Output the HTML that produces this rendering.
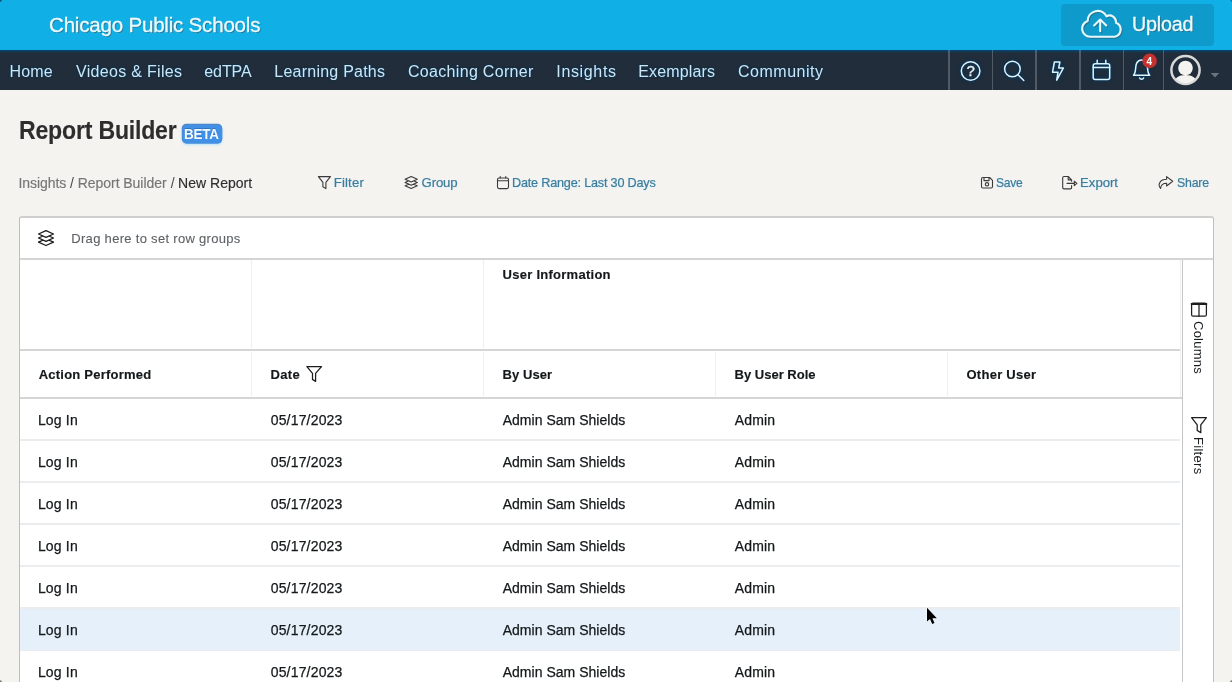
<!DOCTYPE html>
<html lang="en">
<head>
<meta charset="utf-8">
<title>Report Builder - Chicago Public Schools</title>
<style>
*{box-sizing:border-box;margin:0;padding:0}
html,body{width:1232px;height:682px;overflow:hidden;background:#f4f3f0;font-family:"Liberation Sans",sans-serif}
body{position:relative;will-change:transform}
.t{position:absolute;white-space:nowrap;line-height:1;font-weight:normal;transform-origin:0 50%}
header,nav,main,section,.toolbar,.row,.headers{display:block;position:static}
a{text-decoration:none}
.b{position:absolute}
svg{position:absolute;overflow:visible}
#top{left:0;top:0;width:1232px;height:50px;background:#10b0e6}
#upload{left:1061px;top:4px;width:153px;height:42px;border-radius:4px;background:#0e9bcb}
.brand,.upl{color:#ecfbff;text-shadow:1px 1px 0 rgba(60,80,95,.6);-webkit-text-stroke:.3px #ecfbff}
#nav{left:0;top:50px;width:1232px;height:40px;background:linear-gradient(#06446f 0,#0b3f63 1px,#1a3447 2.2px,#212d3a 3.5px,#212d3a 100%)}
.sep{position:absolute;top:50px;width:1.4px;height:40px;background:rgba(255,255,255,.22)}
.nv{color:#cfe6f1;text-shadow:0 0 2px rgba(0,55,95,1),0 0 2px rgba(0,55,95,.8)}
.h1{color:#2d2d2d;font-weight:bold;-webkit-text-stroke:.12px #2d2d2d}
.beta{color:#f2fbff;font-weight:bold;text-shadow:0 -1px 0 rgba(30,60,110,.35)}
.bc.g{color:#767676;-webkit-text-stroke:.15px #767676}
.bc.s{color:#4a4a4a}
.bc.d{color:#2e2e2e;-webkit-text-stroke:.15px #2e2e2e}
.tl{color:#3d7b9a;text-shadow:0 1px 1px #d4f1fd;-webkit-text-stroke:.2px #3d7b9a}
#grid{left:19px;top:216px;width:1195px;height:480px;background:#fff;border:1px solid #bebebe;border-top:2px solid #d0cfce;border-radius:3px}
.hl{position:absolute;height:2px;background:#ebecee}
.hl2{position:absolute;height:2px;background:#d5d5d5}
.vl{position:absolute;width:1px;background:#efefef}
.drag{color:#5e6265;-webkit-text-stroke:.1px #5e6265}
.hd{color:#14181a;font-weight:bold;-webkit-text-stroke:.15px #14181a}
.cl{color:#14181a;-webkit-text-stroke:.25px #14181a}
.side{position:absolute;font-size:13px;line-height:1;color:#181d1f;white-space:nowrap;transform-origin:0 0;transform:rotate(90deg)}
.cn{position:absolute;width:4px;height:4px}
</style>
</head>
<body>
<header>
<div id="top" class="b"></div>
<div class="t brand" style="left:48.91px;top:15px;font-size:20.8px;letter-spacing:-0.220px;transform:scaleX(0.9888);">Chicago Public Schools</div>
<div id="upload" class="b"></div>
<svg style="left:1081px;top:9px;filter:drop-shadow(1px 1px 0 rgba(60,80,95,.55))" width="42" height="30" viewBox="0 0 42 30">
  <path transform="matrix(1.052 0 0 1.0676 -0.96 -1.94)" d="M9.5,27.8 A7.6,7.6 0 0 1 7.2,13 A9.6,9.6 0 0 1 25.2,8.6 A6.2,6.2 0 0 1 34.2,14.6 A6.9,6.9 0 0 1 33,27.8 Z" fill="none" stroke="#e6f9ff" stroke-width="2.05" stroke-linejoin="round"/>
  <path d="M19.2,22.2 V11.2 M13.1,16.5 L19.2,10.5 L25.3,16.5" fill="none" stroke="#e6f9ff" stroke-width="2.05" stroke-linecap="round" stroke-linejoin="round"/>
</svg>
<span class="t upl" style="left:1131.54px;top:14px;font-size:20.5px;letter-spacing:-0.220px;transform:scaleX(0.9622);">Upload</span>
</header>
<nav>
<div id="nav" class="b"></div>
<div class="sep" style="left:948.3px"></div>
<div class="sep" style="left:991.8px"></div>
<div class="sep" style="left:1035.3px"></div>
<div class="sep" style="left:1079.3px"></div>
<div class="sep" style="left:1122.8px"></div>
<div class="sep" style="left:1162.9px"></div>
<a class="t nv" style="left:9.60px;top:64px;font-size:16px;letter-spacing:0.140px;">Home</a>
<a class="t nv" style="left:76.00px;top:64px;font-size:16px;letter-spacing:0.309px;">Videos &amp; Files</a>
<a class="t nv" style="left:204.30px;top:64px;font-size:16px;letter-spacing:-0.089px;">edTPA</a>
<a class="t nv" style="left:274.30px;top:64px;font-size:16px;letter-spacing:0.236px;">Learning Paths</a>
<a class="t nv" style="left:408.00px;top:64px;font-size:16px;letter-spacing:0.312px;">Coaching Corner</a>
<a class="t nv" style="left:556.30px;top:64px;font-size:16px;letter-spacing:0.651px;">Insights</a>
<a class="t nv" style="left:638.30px;top:64px;font-size:16px;letter-spacing:0.140px;">Exemplars</a>
<a class="t nv" style="left:738.00px;top:64px;font-size:16px;letter-spacing:0.512px;">Community</a>
<svg class="ni" style="left:949px;top:52px" width="283" height="38" viewBox="949 52 283 38">
  <g fill="none" stroke="#dff3fb" stroke-width="1.5" stroke-linecap="round" stroke-linejoin="round" style="filter:drop-shadow(0 0 1.5px rgba(0,55,95,1)) drop-shadow(0 0 1.5px rgba(0,55,95,.8))">
    <circle cx="970.6" cy="71" r="9.3"/>
    <circle cx="1012.4" cy="69" r="7.8"/>
    <path d="M1018,74.7 L1023.8,80.5"/>
    <path d="M1054.4,62 H1059.9 L1058.7,67.9 H1063.4 L1056.7,80.2 L1058,72.3 H1052.5 Z"/>
    <rect x="1093.2" y="63.8" width="16.500" height="15.700" rx="2"/>
    <path d="M1093.2,67.6 H1109.7 M1097.2,60.2 V63 M1105.8,60.2 V63"/>
    <path d="M1133.5,75.2 C1136.4,72.6 1135,66.5 1136.6,63.4 C1137.8,61 1139.8,60.1 1141.6,60.1 C1143.4,60.1 1145.4,61 1146.6,63.4 C1148.2,66.5 1146.8,72.6 1149.7,75.2 Z"/>
    <path d="M1139.6,78 C1140.3,79.6 1142.9,79.6 1143.6,78"/>
  </g>
  <text x="970.6" y="76.1" text-anchor="middle" font-family="Liberation Sans, sans-serif" font-size="15" fill="#dff3fb" stroke="#dff3fb" stroke-width=".35">?</text>
  <circle cx="1149.6" cy="60.9" r="7.3" fill="#c5312f"/>
  <text x="1149.4" y="64.5" text-anchor="middle" font-family="Liberation Sans, sans-serif" font-size="10" font-weight="bold" fill="#fff">4</text>
  <clipPath id="av"><circle cx="1185.5" cy="70" r="13.2"/></clipPath>
  <circle cx="1185.5" cy="70" r="14.1" fill="#212d3a" stroke="#d9d9d9" stroke-width="2.500"/>
  <g clip-path="url(#av)" fill="#f4f3f0">
    <circle cx="1185.5" cy="68" r="7.3"/>
    <path d="M1173.5,86 C1173.5,78.300 1178,75 1185.5,75 C1193,75 1197.5,78.300 1197.5,86 Z"/>
  </g>
  <path d="M1210.7,73 H1219.3 L1215,77.4 Z" fill="#6b747d"/>
</svg>
</nav>
<main>
<svg style="left:176px;top:118px;filter:drop-shadow(0 1px 1px rgba(170,225,255,.95))" width="52" height="32" viewBox="176 118 52 32"><rect x="181.800" y="123.700" width="40.400" height="19.700" rx="4.600" fill="#5783b8"/><rect x="182.300" y="124.500" width="39.900" height="18.900" rx="4.300" fill="#428fe6"/></svg>
<h1 class="t h1" style="left:18.89px;top:118px;font-size:25.5px;letter-spacing:-0.220px;transform:scaleX(0.9053);">Report Builder</h1>
<span class="t beta" style="left:184.41px;top:126px;font-size:15.2px;letter-spacing:-0.220px;transform:scaleX(0.8863);">BETA</span>
<nav class="crumbs">
<a class="t bc g" style="left:18.50px;top:176px;font-size:14px;letter-spacing:-0.064px;">Insights</a>
<span class="t bc s" style="left:69.90px;top:176px;font-size:14px;">/</span>
<a class="t bc g" style="left:77.80px;top:176px;font-size:14px;letter-spacing:-0.056px;">Report Builder</a>
<span class="t bc s" style="left:170.70px;top:176px;font-size:14px;">/</span>
<span class="t bc d" style="left:178.10px;top:176px;font-size:14px;letter-spacing:0.008px;">New Report</span>
</nav>
<div class="toolbar">
<svg style="left:310px;top:170px" width="910" height="26" viewBox="310 170 910 26">
  <g fill="none" stroke="#3a3a3a" stroke-width="1.1" stroke-linejoin="round" stroke-linecap="round">
    <path d="M318.4,176.6 H330.4 L325.9,182.4 V188.6 L322.9,186.8 V182.4 Z"/>
    <path d="M411.20,176.50 L417.30,179.20 L411.20,181.91 L405.10,179.20 Z M408.82,180.85 L405.10,182.50 L411.20,185.20 L417.30,182.50 L413.58,180.85 M408.82,184.15 L405.10,185.80 L411.20,188.50 L417.30,185.80 L413.58,184.15"/>
    <rect x="497.5" y="178" width="11" height="10.6" rx="1.6"/>
    <path d="M497.5,180.8 H508.500 M500.2,176.500 V178 M505.8,176.500 V178"/>
    <path d="M982.9,177.500 H989.6 L992.500,180.4 V186.6 Q992.500,188 991.1,188 H982.9 Q981.500,188 981.500,186.6 V178.900 Q981.500,177.500 982.9,177.500 Z M984,177.500 V180.6 H989 V177.500"/>
    <circle cx="987" cy="184.300" r="1.7"/>
    <path d="M1071.6,185.500 V187.600 Q1071.600,188.900 1070.300,188.900 H1064 Q1062.700,188.900 1062.700,187.600 V177.800 Q1062.700,176.500 1064,176.500 H1068.200 L1071.600,179.900 V181.300 M1068.200,176.500 V179.900 H1071.600 M1067,183.400 H1074.300 M1074.300,181.200 L1076.900,183.400 L1074.300,185.600 Z"/>
    <path d="M1166.6,176.600 L1172.700,181.300 L1166.600,186 V183.300 C1162.600,183.300 1160.900,184.900 1160.600,188.400 C1157.200,184.400 1160.200,179.300 1166.600,179.300 Z"/>
  </g>
</svg>
<a class="t tl" style="left:333.80px;top:176px;font-size:13.2px;letter-spacing:0.137px;">Filter</a>
<a class="t tl" style="left:421.50px;top:176px;font-size:13.2px;letter-spacing:-0.129px;">Group</a>
<a class="t tl" style="left:511.84px;top:176px;font-size:13.2px;letter-spacing:-0.220px;transform:scaleX(0.9609);">Date Range: Last 30 Days</a>
<a class="t tl" style="left:995.60px;top:176px;font-size:13.2px;letter-spacing:-0.220px;transform:scaleX(0.9118);">Save</a>
<a class="t tl" style="left:1080.10px;top:176px;font-size:13.2px;letter-spacing:-0.050px;">Export</a>
<a class="t tl" style="left:1176.80px;top:176px;font-size:13.2px;letter-spacing:-0.220px;transform:scaleX(0.9360);">Share</a>
</div>
<section class="gridwrap" role="grid">
<div id="grid" class="b"></div>
<div class="vl" style="left:251px;top:260px;height:88px"></div>
<div class="vl" style="left:483px;top:260px;height:88px"></div>
<div class="vl" style="left:251px;top:352px;height:44px"></div>
<div class="vl" style="left:483px;top:352px;height:44px"></div>
<div class="vl" style="left:715px;top:352px;height:44px"></div>
<div class="vl" style="left:947px;top:352px;height:44px"></div>
<div class="vl" style="left:1180px;top:260px;height:137px"></div>
<div class="vl" style="left:1182px;top:260px;height:440px;background:#c3c6c9"></div>
<div class="hl2" style="left:20px;top:258px;width:1193px"></div>
<div class="hl2" style="left:20px;top:349px;width:1160px"></div>
<div class="hl2" style="left:20px;top:397px;width:1162px"></div>
<div class="hl" style="left:20px;top:439px;width:1160px"></div>
<div class="hl" style="left:20px;top:481px;width:1160px"></div>
<div class="hl" style="left:20px;top:523px;width:1160px"></div>
<div class="hl" style="left:20px;top:565px;width:1160px"></div>
<div class="hl" style="left:20px;top:607px;width:1160px"></div>
<div class="hl" style="left:20px;top:649px;width:1160px"></div>
<div class="b" style="left:20px;top:608.6px;width:1160px;height:41.4px;background:#e5f0fa"></div>
<div class="t drag" style="left:71.30px;top:232px;font-size:13px;letter-spacing:0.302px;">Drag here to set row groups</div>
<div class="headers" role="row">
<div class="t hd" style="left:502.60px;top:268px;font-size:13px;letter-spacing:0.262px;">User Information</div>
<div class="t hd" style="left:38.70px;top:368px;font-size:13px;letter-spacing:0.231px;">Action Performed</div>
<div class="t hd" style="left:270.60px;top:368px;font-size:13px;letter-spacing:0.318px;">Date</div>
<div class="t hd" style="left:502.60px;top:368px;font-size:13px;letter-spacing:0.054px;">By User</div>
<div class="t hd" style="left:734.60px;top:368px;font-size:13px;">By User Role</div>
<div class="t hd" style="left:966.50px;top:368px;font-size:13px;letter-spacing:0.263px;">Other User</div>
</div>
<div class="row" role="row">
<div class="t cl" style="left:37.90px;top:413px;font-size:14px;letter-spacing:0.172px;">Log In</div>
<div class="t cl" style="left:270.70px;top:413px;font-size:14px;letter-spacing:0.180px;">05/17/2023</div>
<div class="t cl" style="left:502.70px;top:413px;font-size:14px;letter-spacing:0.021px;">Admin Sam Shields</div>
<div class="t cl" style="left:734.70px;top:413px;font-size:14px;letter-spacing:0.176px;">Admin</div>
</div>
<div class="row" role="row">
<div class="t cl" style="left:37.90px;top:455px;font-size:14px;letter-spacing:0.172px;">Log In</div>
<div class="t cl" style="left:270.70px;top:455px;font-size:14px;letter-spacing:0.180px;">05/17/2023</div>
<div class="t cl" style="left:502.70px;top:455px;font-size:14px;letter-spacing:0.021px;">Admin Sam Shields</div>
<div class="t cl" style="left:734.70px;top:455px;font-size:14px;letter-spacing:0.176px;">Admin</div>
</div>
<div class="row" role="row">
<div class="t cl" style="left:37.90px;top:497px;font-size:14px;letter-spacing:0.172px;">Log In</div>
<div class="t cl" style="left:270.70px;top:497px;font-size:14px;letter-spacing:0.180px;">05/17/2023</div>
<div class="t cl" style="left:502.70px;top:497px;font-size:14px;letter-spacing:0.021px;">Admin Sam Shields</div>
<div class="t cl" style="left:734.70px;top:497px;font-size:14px;letter-spacing:0.176px;">Admin</div>
</div>
<div class="row" role="row">
<div class="t cl" style="left:37.90px;top:539px;font-size:14px;letter-spacing:0.172px;">Log In</div>
<div class="t cl" style="left:270.70px;top:539px;font-size:14px;letter-spacing:0.180px;">05/17/2023</div>
<div class="t cl" style="left:502.70px;top:539px;font-size:14px;letter-spacing:0.021px;">Admin Sam Shields</div>
<div class="t cl" style="left:734.70px;top:539px;font-size:14px;letter-spacing:0.176px;">Admin</div>
</div>
<div class="row" role="row">
<div class="t cl" style="left:37.90px;top:581px;font-size:14px;letter-spacing:0.172px;">Log In</div>
<div class="t cl" style="left:270.70px;top:581px;font-size:14px;letter-spacing:0.180px;">05/17/2023</div>
<div class="t cl" style="left:502.70px;top:581px;font-size:14px;letter-spacing:0.021px;">Admin Sam Shields</div>
<div class="t cl" style="left:734.70px;top:581px;font-size:14px;letter-spacing:0.176px;">Admin</div>
</div>
<div class="row" role="row">
<div class="t cl" style="left:37.90px;top:623px;font-size:14px;letter-spacing:0.172px;">Log In</div>
<div class="t cl" style="left:270.70px;top:623px;font-size:14px;letter-spacing:0.180px;">05/17/2023</div>
<div class="t cl" style="left:502.70px;top:623px;font-size:14px;letter-spacing:0.021px;">Admin Sam Shields</div>
<div class="t cl" style="left:734.70px;top:623px;font-size:14px;letter-spacing:0.176px;">Admin</div>
</div>
<div class="row" role="row">
<div class="t cl" style="left:37.90px;top:665px;font-size:14px;letter-spacing:0.172px;">Log In</div>
<div class="t cl" style="left:270.70px;top:665px;font-size:14px;letter-spacing:0.180px;">05/17/2023</div>
<div class="t cl" style="left:502.70px;top:665px;font-size:14px;letter-spacing:0.021px;">Admin Sam Shields</div>
<div class="t cl" style="left:734.70px;top:665px;font-size:14px;letter-spacing:0.176px;">Admin</div>
</div>
<div class="side" style="left:1205.4px;top:321.4px;letter-spacing:.25px">Columns</div>
<div class="side" style="left:1205.4px;top:437px;letter-spacing:.3px">Filters</div>
<svg style="left:30px;top:225px" width="1190" height="220" viewBox="30 225 1190 220">
  <g fill="none" stroke="#1d1d1d" stroke-width="1.25" stroke-linejoin="round" stroke-linecap="round">
    <path d="M46.00,230.60 L53.50,233.96 L46.00,237.31 L38.50,233.96 Z M43.08,236.00 L38.50,238.05 L46.00,241.41 L53.50,238.05 L48.92,236.00 M43.08,240.10 L38.50,242.14 L46.00,245.50 L53.50,242.14 L48.92,240.10"/>
    <path d="M306.900,366.600 H321.500 L315.600,373.300 V381.400 L312.500,379.400 V373.300 Z"/>
    <rect x="1191.600" y="303.100" width="14.800" height="13.100" rx="1.500"/>
    <path d="M1191.600,304 H1206.400" stroke-width="2"/><path d="M1199,305 V316.200"/>
    <path d="M1191.600,417.700 H1206.400 L1200.800,424.900 V432.700 L1197.200,430.400 V424.900 Z"/>
  </g>
</svg>
</section>
</main>
<svg style="left:925px;top:606px" width="16" height="22" viewBox="0 0 16 22">
  <path d="M2,1.800 V15.600 L5,13 L7.200,17.900 L9.500,16.900 L7.400,12.200 H11.900 Z" fill="#000" stroke="#fff" stroke-width="1" stroke-linejoin="round" paint-order="stroke"/>
</svg>
<div class="cn" style="left:0;top:0;background:radial-gradient(circle at 0 0,#0a3050 0,rgba(10,48,80,.6) 1.2px,rgba(10,48,80,0) 2.6px)"></div>
<div class="cn" style="right:0;top:0;background:radial-gradient(circle at 100% 0,#0a4a70 0,rgba(10,74,112,.6) 1px,rgba(10,74,112,0) 2.2px)"></div>
<div class="cn" style="left:0;bottom:0;background:radial-gradient(circle at 0 100%,#4a4a4a 0,rgba(74,74,74,.6) 1.2px,rgba(74,74,74,0) 2.6px)"></div>
<div class="cn" style="right:0;bottom:0;background:radial-gradient(circle at 100% 100%,#4a4a4a 0,rgba(74,74,74,.6) 1.2px,rgba(74,74,74,0) 2.6px)"></div>
</body>
</html>
